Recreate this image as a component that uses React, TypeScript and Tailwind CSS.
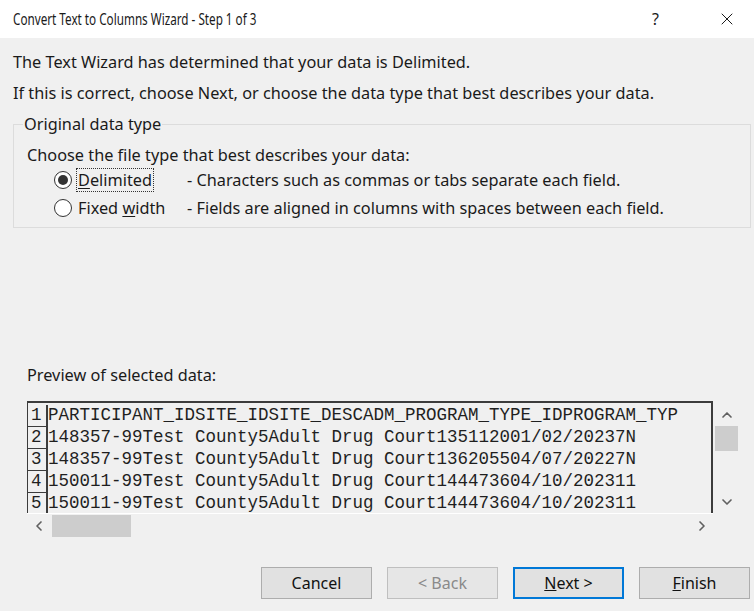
import { ChevronLeft, ChevronRight, ChevronUp, ChevronDown, X } from "lucide-react";

const ui = "font-['Noto_Sans','Open_Sans',sans-serif]";

const rows = [
  "PARTICIPANT_IDSITE_IDSITE_DESCADM_PROGRAM_TYPE_IDPROGRAM_TYP",
  "148357-99Test County5Adult Drug Court135112001/02/20237N",
  "148357-99Test County5Adult Drug Court136205504/07/20227N",
  "150011-99Test County5Adult Drug Court144473604/10/202311",
  "150011-99Test County5Adult Drug Court144473604/10/202311",
];

const Radio = ({ checked }: { checked: boolean }) => (
  <span className="flex h-[18px] w-[18px] items-center justify-center rounded-full border border-[#333] bg-white">
    {checked && <span className="h-[10px] w-[10px] rounded-full bg-[#333]" />}
  </span>
);

const WizardButton = ({
  children,
  disabled,
  focused,
}: {
  children: React.ReactNode;
  disabled?: boolean;
  focused?: boolean;
}) => (
  <button
    className={
      "h-[32px] w-[111px] text-[16px] " +
      (focused
        ? "border-2 border-[#0078d7] bg-[#e1e1e1] text-[#111]"
        : disabled
          ? "border border-[#bfbfbf] bg-[#e6e6e6] text-[#8a8a8a]"
          : "border border-[#adadad] bg-[#e1e1e1] text-[#111]")
    }
  >
    {children}
  </button>
);

export default function App() {
  return (
    <div className={`${ui} h-[611px] w-[754px] overflow-hidden bg-[#f0f0f0] text-[#1a1a1a]`}>
      {/* title bar */}
      <div className="flex h-[38px] items-center bg-white pl-[13px]">
        <span className="flex-1">
          <span className="inline-block origin-left scale-x-[0.755] whitespace-nowrap text-[15.5px]">
            Convert Text to Columns Wizard - Step 1 of 3
          </span>
        </span>
        <span className="mr-[58px] text-[16px]">?</span>
        <X className="mr-[17px] h-[20px] w-[20px]" strokeWidth={1.2} />
      </div>

      <div className="px-[13px] text-[16.3px]">
        <p className="mt-[13px] leading-[22px]">The Text Wizard has determined that your data is Delimited.</p>
        <p className="mt-[9px] leading-[22px]">If this is correct, choose Next, or choose the data type that best describes your data.</p>

        {/* data type group */}
        <fieldset className="mt-[9px] w-[738px] border border-[#dcdcdc] pb-[8px] pl-[13px] pr-[4px]">
          <legend className="ml-[-4px] px-[1px] leading-[22px]">Original data type</legend>
          <p className="mt-[9px] leading-[22px]">Choose the file type that best describes your data:</p>
          <div className="mt-[3px] flex items-center leading-[22px]">
            <span className="ml-[27px]"><Radio checked /></span>
            <span className="ml-[5px] w-[110px]">
              <span className="px-[1px] outline outline-1 outline-dotted outline-[#333]">
                <u className="underline-offset-2">D</u>elimited
              </span>
            </span>
            <span>- Characters such as commas or tabs separate each field.</span>
          </div>
          <div className="mt-[6px] flex items-center leading-[22px]">
            <span className="ml-[27px]"><Radio checked={false} /></span>
            <span className="ml-[6px] w-[109px]">
              Fixed <u className="underline-offset-2">w</u>idth
            </span>
            <span>- Fields are aligned in columns with spaces between each field.</span>
          </div>
        </fieldset>

        <p className="ml-[14px] mt-[136px] leading-[22px]">Preview of selected data:</p>

        {/* preview grid */}
        <div className="ml-[14px] mt-[15px] flex w-[727px]">
          <div className="h-[112px] w-[686px] overflow-hidden border-l border-t-2 border-r-2 border-[#3c3c3c] bg-[#f0f0f0] pt-[2px] font-['Liberation_Mono','Courier_New',monospace] text-[17.5px] leading-[21px] text-[#1f1f1f]">
            {rows.map((r, i) => (
              <div key={i} className="flex whitespace-pre">
                <span className="w-[20px] shrink-0 border-b border-r-2 border-[#3c3c3c] pl-[3px]">{i + 1}</span>
                <span>{r}</span>
              </div>
            ))}
            <div className="h-[10px] w-[20px] border-r-2 border-[#3c3c3c]" />
          </div>
          <div className="flex h-[112px] w-[27px] flex-col items-center">
            <ChevronUp className="mt-[6px] h-[16px] w-[16px] text-[#606060]" strokeWidth={2.5} />
            <div className="mt-[3px] h-[25px] w-[23px] bg-[#cdcdcd]" />
            <div className="flex-1" />
            <ChevronDown className="mb-[3px] h-[16px] w-[16px] text-[#606060]" strokeWidth={2.5} />
          </div>
        </div>
        <div className="ml-[14px] flex h-[25px] w-[686px] items-center border-t border-white">
          <ChevronLeft className="ml-[4px] h-[16px] w-[16px] text-[#606060]" strokeWidth={2.5} />
          <div className="ml-[5px] h-[22px] w-[79px] bg-[#cdcdcd]" />
          <div className="flex-1" />
          <ChevronRight className="mr-[3px] h-[16px] w-[16px] text-[#606060]" strokeWidth={2.5} />
        </div>

        {/* buttons */}
        <div className="mr-[-9px] mt-[29px] flex justify-end gap-[15px]">
          <WizardButton>Cancel</WizardButton>
          <WizardButton disabled>&lt; Back</WizardButton>
          <WizardButton focused>
            <u>N</u>ext &gt;
          </WizardButton>
          <WizardButton>
            <u>F</u>inish
          </WizardButton>
        </div>
      </div>
    </div>
  );
}
